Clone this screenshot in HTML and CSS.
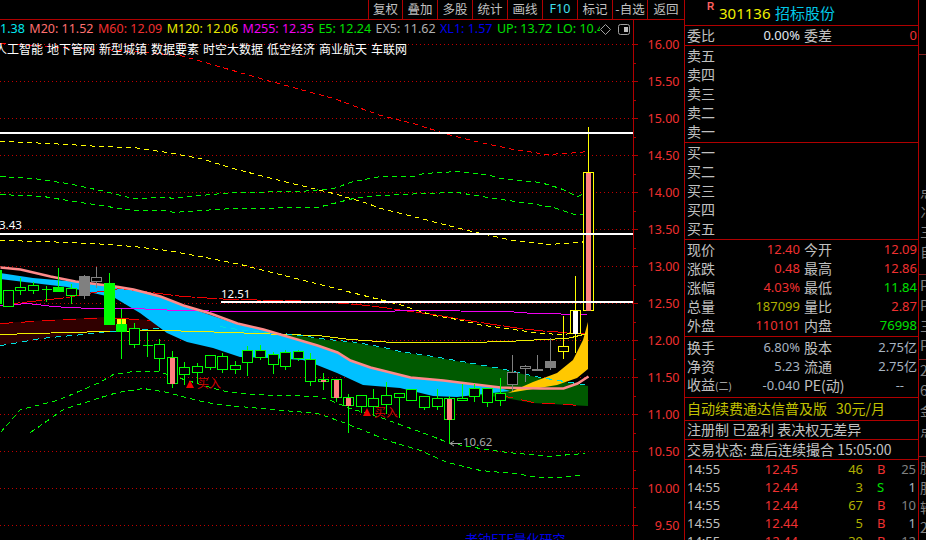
FILE: index.html
```html
<!DOCTYPE html>
<html lang="zh">
<head>
<meta charset="utf-8">
<title>301136 招标股份</title>
<link rel="stylesheet" href="styles.css">
</head>
<body>
<div class="chart-col">
  <nav class="toolbar">
    <span class="tool tool-first">复权</span><span class="tool">叠加</span><span class="tool">多股</span><span class="tool">统计</span><span class="tool">画线</span><span class="tool tool-cyan">F10</span><span class="tool">标记</span><span class="tool">-自选</span><span class="tool tool-last">返回</span>
  </nav>
  <div class="chart">
    <svg class="plot" width="684" height="520" viewBox="0 20 684 520" xmlns="http://www.w3.org/2000/svg">
      <path class="grid" d="M0 44.5H633M0 81.5H633M0 118.5H633M0 155.5H633M0 192.5H633M0 229.5H633M0 266.5H633M0 303.5H633M0 340.5H633M0 377.5H633M0 414.5H633M0 451.5H633M0 488.5H633M0 525.5H633"/>
      <!-- bands -->
      <polygon class="b-maroon" points="0,323 67,319 107,317 150,320 165,328 107,331 67,335 33,340 0,345"/>
      <polygon class="b-green" points="220,328 243,331 267,333 293,335 327,340 357,343 383,348 400,352 433,357 467,363 500,369 540,378 588,386 588,406 533,403 500,397 440,392 400,380 340,355 280,335"/>
      <polygon class="b-blue" points="0,273 33,278 67,281 115,286 160,296 187,307 213,316 240,325 263,329 290,337 317,345 337,352 350,360 370,367 390,372 410,377 443,380 467,383 500,388 510,391 457,397 433,396 400,388 363,385 337,373 317,365 303,360 270,358 240,357 213,348 187,342 167,333 140,313 115,298 67,287 33,283 0,279"/>
      <polygon class="b-gold" points="508,393 533,382 557,373 573,360 583,340 588,322 588,369 577,378 557,385 533,389"/>
      <!-- averages -->
      <polyline class="l-red" points="0,305 13,303 40,300 67,297 93,292 120,288 150,292 183,296 230,299 283,300 317,301 357,304 383,307 410,311 433,314 467,320 493,324 520,328 547,331 587,333"/>
      <polyline class="l-magenta" points="0,305 27,303 53,306 67,307 93,308 133,308 177,310 240,311 380,311 410,310 507,311 533,313 587,314"/>
      <polyline class="l-yellow" points="0,334 67,332 107,331 163,330 230,332 283,334 317,335 350,339 393,342 467,342 507,341 543,339 567,338 587,333"/>
      <polyline class="l-red-d" points="0,323 67,319 107,317 150,320"/>
      <polyline class="l-red-d" points="500,395 510,397 533,402 580,405"/>
      <polyline class="l-cyan" points="0,345 13,343 40,338 72,335 93,333 107,331 160,328"/>
      <polyline class="l-cyan" points="220,326 243,330 267,332 293,334 327,339 357,342 383,347 400,351 433,356 467,362 500,368 540,377 588,385"/>
      <polyline class="l-salmon" points="0,267 20,269 50,276 75,281 115,286 133,289 160,296 183,305 210,313 237,323 263,329 290,337 317,345 337,352 350,360 370,367 390,372 410,377 443,380 467,383 500,387 540,388 563,388 577,383 588,376"/>
      <!-- channel lines -->
      <polyline class="d-red" points="0,43 60,47 120,50 180,55 267,80 333,98 380,115 413,123 447,134 480,142 513,149 547,154 580,152 585,151"/>
      <polyline class="d-yellow" points="0,141 27,142 67,144 100,146 133,147 167,152 200,158 233,168 267,177 300,185 333,193 367,203 380,208 413,216 447,225 480,233 513,240 547,244 580,242 584,241"/>
      <polyline class="d-green" points="0,176 33,178 67,183 100,190 133,198 167,197 173,198 200,195 233,192 300,191 333,188 353,181 380,176 413,176 423,173 457,171 490,175 500,178 540,182 560,188 577,196 584,193"/>
      <polyline class="d-green" points="0,194 43,196 67,200 100,205 133,210 167,210 173,212 200,210 233,208 317,207 333,203 353,198 380,195 423,193 457,192 493,198 530,203 553,207 577,215 584,213"/>
      <polyline class="d-yellow" points="0,240 43,241 93,243 133,246 167,250 200,256 240,264 343,290 363,295 383,300 402,305 417,310 433,315 457,319 483,325 507,328 533,332 557,334 577,333"/>
      <polyline class="d-green" points="0,432 20,409 57,400 97,383 113,374 133,371 157,371 187,380 220,390 250,394 283,395 317,396 330,400 350,408 383,418 402,425 427,434 450,443 480,448 507,452 550,456 570,454 585,453"/>
      <polyline class="d-green" points="30,432 63,409 97,398 117,392 143,388 167,392 197,400 217,404 250,407 283,410 317,413 343,422 363,430 390,441 420,450 447,462 480,470 513,473 540,477 560,477 583,474"/>
      <!-- candles -->
      <rect class="solid-g" x="0" y="270" width="2" height="34"/>
      <path class="c-g" d="M3.5 290.5h10v16h-10z"/>
      <path class="c-g" d="M20.5 278V287M20.5 290V295M15.5 287.5h10v3h-10z"/>
      <path class="c-g" d="M33.5 282V285M33.5 290V294M28.5 285.5h10v5h-10z"/>
      <path class="c-g" d="M46.5 286V302M41.5 289.5h10"/>
      <path class="c-g" d="M58.5 268V287"/><rect class="solid-g" x="53" y="287" width="11" height="5"/>
      <path class="c-g" d="M71.5 284V288M71.5 295V304M66.5 288.5h10v7h-10z"/>
      <path class="c-w" d="M84.5 275V299"/><rect class="solid-w" x="79" y="276" width="11" height="20"/>
      <path class="c-w" d="M96.5 267V277M96.5 281V288M91.5 277.5h10v4h-10z"/>
      <path class="c-g" d="M109.5 273V283"/><rect class="solid-g" x="104" y="283" width="11" height="42"/>
      <path class="c-g" d="M121.5 309V324M121.5 332V359"/><rect class="solid-g" x="116" y="324" width="11" height="8"/>
      <rect class="mark-y" x="117" y="319" width="4" height="5"/><rect class="mark-y" x="122" y="319" width="4" height="5"/><rect class="mark-r" x="117" y="318" width="9" height="1"/>
      <path class="c-g" d="M134.5 323V328M134.5 345V348M129.5 328.5h10v16h-10z"/>
      <path class="c-g" d="M147.5 332V357M142.5 345.5h10"/>
      <path class="c-g" d="M159.5 339V344M159.5 359V371M154.5 344.5h10v14h-10z"/>
      <path class="c-g" d="M172.5 351V357M172.5 384V388M167.5 357.5h10v26h-10z"/><rect class="pink" x="170" y="358" width="5" height="26"/>
      <path class="c-g" d="M184.5 362V367M184.5 375V385M179.5 367.5h10v7h-10z"/>
      <path class="c-g" d="M197.5 363V366M197.5 373V383M192.5 366.5h10v6h-10z"/>
      <path class="c-g" d="M210.5 367V370M205.5 355.5h10v12h-10z"/>
      <path class="c-g" d="M222.5 353V356M222.5 370V373M217.5 356.5h10v13h-10z"/>
      <path class="c-g" d="M235.5 361V365M235.5 370V374M230.5 365.5h10v4h-10z"/>
      <path class="c-g" d="M247.5 346V350M247.5 363V376M242.5 350.5h10v12h-10z"/>
      <path class="c-g" d="M260.5 345V350M260.5 358V360M255.5 350.5h10v7h-10z"/>
      <path class="c-g" d="M273.5 352V354M273.5 365V374M268.5 354.5h10v10h-10z"/>
      <path class="c-g" d="M285.5 350V352M285.5 367V370M280.5 352.5h10v14h-10z"/>
      <path class="c-g" d="M298.5 350V351M298.5 359V361M293.5 351.5h10v7h-10z"/>
      <path class="c-g" d="M310.5 353V359M310.5 382V386M305.5 359.5h10v22h-10z"/>
      <path class="c-g" d="M323.5 373V379M323.5 382V390M318.5 379.5h10v2h-10z"/><rect class="pink" x="321" y="380" width="5" height="2"/>
      <path class="c-g" d="M336.5 398V402M331.5 379.5h10v18h-10z"/><rect class="pink" x="334" y="380" width="5" height="18"/>
      <path class="c-g" d="M348.5 394V397M348.5 406V433M343.5 397.5h10v8h-10z"/><rect class="pink" x="346" y="398" width="5" height="8"/>
      <path class="c-g" d="M361.5 407V413M356.5 395.5h10v11h-10z"/>
      <path class="c-g" d="M373.5 389V398M373.5 407V415M368.5 398.5h10v8h-10z"/>
      <path class="c-g" d="M386.5 382V395M386.5 405V414M381.5 395.5h10v9h-10z"/>
      <path class="c-g" d="M399.5 398V418M394.5 393.5h10v4h-10z"/>
      <path class="c-g" d="M406.5 389.5h10v11h-10z"/>
      <path class="c-g" d="M424.5 408V410M419.5 396.5h10v11h-10z"/>
      <path class="c-g" d="M437.5 389V398M437.5 407V410M432.5 398.5h10v8h-10z"/>
      <path class="c-g" d="M449.5 396V398M449.5 420V443M444.5 398.5h10v21h-10z"/><rect class="pink" x="447" y="399" width="5" height="21"/>
      <path class="c-g" d="M462.5 384V398M457.5 398.5h10v2h-10z"/>
      <path class="c-g" d="M474.5 384V388M474.5 397V402M469.5 388.5h10v8h-10z"/>
      <path class="c-g" d="M487.5 403V407M482.5 388.5h10v14h-10z"/>
      <path class="c-g" d="M500.5 378V393M500.5 401V406M495.5 393.5h10v7h-10z"/>
      <path class="c-w" d="M512.5 355V372M512.5 385V391M507.5 372.5h10v12h-10z"/>
      <path class="c-w" d="M525.5 365V366M525.5 369V382M520.5 366.5h10v2h-10z"/>
      <path class="c-w" d="M537.5 355V369M532.5 369.5h10v1h-10z"/>
      <path class="c-w" d="M550.5 338V361M550.5 368V370"/><rect class="solid-w" x="545" y="361" width="11" height="7"/>
      <path class="c-y" d="M563.5 316V346M563.5 352V359M558.5 346.5h10v5h-10z"/>
      <path class="c-y" d="M575.5 276V310M575.5 334V353M570.5 310.5h10v23h-10z"/><rect class="white" x="573" y="311" width="5" height="23"/>
      <path class="c-y" d="M588.5 127V172M583.5 172.5h10v138h-10z"/><rect class="pink" x="586" y="173" width="5" height="138"/>
      <!-- horizontal levels -->
      <rect class="level" x="0" y="132" width="633" height="2"/>
      <rect class="level" x="0" y="233" width="633" height="2"/>
      <rect class="level" x="221" y="301" width="412" height="2"/>
      <text class="t-white" x="-1" y="229">3.43</text>
      <text class="t-white" x="221" y="298">12.51</text>
      <!-- buy markers -->
      <polygon class="tri" points="190,380 194,388 186,388"/>
      <text class="t-buy" x="197" y="388">买入</text>
      <polygon class="tri" points="367,408 371,416 363,416"/>
      <text class="t-buy" x="374" y="417">买入</text>
      <path class="arrow" d="M450 443.5H462M450 443.5L454 441M450 443.5L454 446"/>
      <text class="t-gray" x="463" y="446">10.62</text>
      <text class="t-blue" x="465" y="544">老钟ETF量化研究</text>
      <!-- legend icons -->
      <polygon class="diamond" points="605.5,24.5 610.5,29.5 605.5,34.5 600.5,29.5"/>
      <rect class="box" x="618.5" y="24.5" width="11" height="10" rx="2"/>
      <rect class="box-in" x="624" y="27" width="4" height="5"/>
      <!-- axis -->
      <path class="axis" d="M633.5 20V540"/>
      <path class="axis" d="M633 44.5H638M633 63.5H636M633 81.5H638M633 100.5H636M633 118.5H638M633 137.5H636M633 155.5H638M633 174.5H636M633 192.5H638M633 211.5H636M633 229.5H638M633 248.5H636M633 266.5H638M633 285.5H636M633 303.5H638M633 322.5H636M633 340.5H638M633 359.5H636M633 377.5H638M633 396.5H636M633 414.5H638M633 433.5H636M633 451.5H638M633 470.5H636M633 488.5H638M633 507.5H636M633 525.5H638"/>
      <text class="tick" x="679.5" y="48.5">16.00</text>
      <text class="tick" x="679.5" y="85.5">15.50</text>
      <text class="tick" x="679.5" y="122.5">15.00</text>
      <text class="tick" x="679.5" y="159.5">14.50</text>
      <text class="tick" x="679.5" y="196.5">14.00</text>
      <text class="tick" x="679.5" y="233.5">13.50</text>
      <text class="tick" x="679.5" y="270.5">13.00</text>
      <text class="tick" x="679.5" y="307.5">12.50</text>
      <text class="tick" x="679.5" y="344.5">12.00</text>
      <text class="tick" x="679.5" y="381.5">11.50</text>
      <text class="tick" x="679.5" y="418.5">11.00</text>
      <text class="tick" x="679.5" y="455.5">10.50</text>
      <text class="tick" x="679.5" y="492.5">10.00</text>
      <text class="tick" x="679.5" y="529.5">9.50</text>
    </svg>
    <div class="legend">
      <span class="cyan">1.38</span><span class="salmon">M20: 11.52</span><span class="red">M60: 12.09</span><span class="yellow">M120: 12.06</span><span class="magenta">M255: 12.35</span><span class="green">E5: 12.24</span><span class="gray">EX5: 11.62</span><span class="blue">XL1: 1.57</span><span class="green">UP: 13.72</span><span class="green">LO: 10.48</span>
    </div>
    <div class="themes">
      <span>人工智能</span><span>地下管网</span><span>新型城镇</span><span>数据要素</span><span>时空大数据</span><span>低空经济</span><span>商业航天</span><span>车联网</span>
    </div>
  </div>
</div>
<aside class="panel">
  <header class="p-head">
    <span class="p-r">R</span><span class="p-code">301136</span><span class="p-name">招标股份</span>
  </header>
  <section class="q q-1">
    <span>委比</span><b class="num white-b">0.00%</b><span class="l2">委差</span><b class="num red">0</b>
  </section>
  <section class="q q-5 q-list">
    <span>卖五</span><span>卖四</span><span>卖三</span><span>卖二</span><span>卖一</span>
  </section>
  <section class="q q-5 q-list">
    <span>买一</span><span>买二</span><span>买三</span><span>买四</span><span>买五</span>
  </section>
  <section class="q q-5">
    <span>现价</span><b class="num red">12.40</b><span class="l2">今开</span><b class="num red">12.09</b>
    <span>涨跌</span><b class="num red">0.48</b><span class="l2">最高</span><b class="num red">12.86</b>
    <span>涨幅</span><b class="num red">4.03%</b><span class="l2">最低</span><b class="num green">11.84</b>
    <span>总量</span><b class="num olive">187099</b><span class="l2">量比</span><b class="num red">2.87</b>
    <span>外盘</span><b class="num red">110101</b><span class="l2">内盘</span><b class="num green">76998</b>
  </section>
  <section class="q q-3">
    <span>换手</span><b class="num steel">6.80%</b><span class="l2">股本</span><b class="num steel">2.75亿</b>
    <span>净资</span><b class="num steel">5.23</b><span class="l2">流通</span><b class="num steel">2.75亿</b>
    <span>收益<small class="sub">(二)</small></span><b class="num steel">-0.040</b><span class="l2">PE(动)</span><b class="num steel num-dash">--</b>
  </section>
  <div class="line line-ad"><span>自动续费通达信普及版</span><span class="ad-price">30元/月</span></div>
  <div class="line line-reg">注册制 已盈利 表决权无差异</div>
  <div class="line line-state">交易状态: 盘后连续撮合 15:05:00</div>
  <section class="ticks">
    <span>14:55</span><b class="num red">12.45</b><b class="num olive">46</b><b class="flag red">B</b><b class="num dim">25</b>
    <span>14:55</span><b class="num red">12.44</b><b class="num olive">3</b><b class="flag green">S</b><b class="num steel">1</b>
    <span>14:55</span><b class="num red">12.44</b><b class="num olive">67</b><b class="flag red">B</b><b class="num dim">10</b>
    <span>14:55</span><b class="num red">12.44</b><b class="num olive">5</b><b class="flag red">B</b><b class="num steel">1</b>
    <span>14:55</span><b class="num red">12.44</b><b class="num olive">39</b><b class="flag red">B</b><b class="num dim">12</b>
  </section>
</aside>
<aside class="far">
  <div class="far-sec far-a"></div>
  <div class="far-sec far-b"><span>点</span><span>冫</span><span>三</span><span>自</span></div>
  <div class="far-sec far-c"><span>P</span><span>P</span><span>三</span><span>P</span></div>
  <div class="far-sec far-d"><span>2</span><span>6</span><span>金</span><span>点</span></div>
  <div class="far-sec far-e"><span>胜</span><span>肝</span><span>轮</span><span>2</span></div>
</aside>
</body>
</html>
```
FILE: styles.css
```css
* { box-sizing: border-box; }
html, body { margin: 0; padding: 0; }
body {
  width: 926px;
  height: 540px;
  overflow: hidden;
  display: flex;
  background: #000;
  color: #c0c0c0;
  font-family: "Noto Sans", "Noto Sans CJK SC", sans-serif;
  font-size: 14px;
}

/* left column */
.chart-col { width: 684px; height: 540px; display: flex; flex-direction: column; }
.toolbar { height: 20px; display: flex; justify-content: flex-end; border-bottom: 1px solid #b00000; }
.tool {
  width: 35px;
  border-left: 1px solid #b00000;
  font-family: "Noto Sans CJK SC", "Noto Sans", sans-serif;
  font-size: 12.5px;
  line-height: 18px;
  text-align: center;
  white-space: nowrap;
  overflow: hidden;
}
.tool-first { width: 34px; }
.tool-last { width: 37px; }
.tool-cyan { color: #40e0f0; font-family: "Noto Sans", sans-serif; }

.chart { position: relative; flex: 1; overflow: hidden; }
.plot { display: block; }

.grid { stroke: #c00000; stroke-width: 1; stroke-dasharray: 1 3; fill: none; }
.b-maroon { fill: #300000; }
.b-green { fill: #005a00; }
.b-blue { fill: #00c0ff; }
.b-gold { fill: #ffc800; }

polyline { fill: none; shape-rendering: crispEdges; transform: translate(.5px, .5px); }
.l-red { stroke: #f00000; stroke-dasharray: 20 2; }
.l-magenta { stroke: #f000f0; }
.l-yellow { stroke: #f0f000; }
.l-red-d { stroke: #f00000; stroke-dasharray: 13 8; }
.l-cyan { stroke: #00e0e0; stroke-dasharray: 6 5; }
.l-salmon { stroke: #ff8a8a; stroke-width: 2.5; shape-rendering: auto; }
.d-red { stroke: #ff0000; stroke-dasharray: 5 4; }
.d-yellow { stroke: #ffff00; stroke-dasharray: 5 4; }
.d-green { stroke: #00f800; stroke-dasharray: 5 4; }

.c-g, .c-w, .c-y { fill: #000; stroke-width: 1; shape-rendering: crispEdges; }
.c-g { stroke: #00ff00; }
.c-w { stroke: #808080; }
.c-y { stroke: #ffff00; }
.solid-g { fill: #00ff00; }
.solid-w { fill: #808080; }
.pink { fill: #ff8080; }
.white { fill: #fff; }
.mark-y { fill: #ffff00; }
.mark-r { fill: #f00000; }
.level { fill: #fff; }
.tri { fill: #f00000; }
.arrow { stroke: #a0a0a0; fill: none; }
.diamond { fill: none; stroke: #a0a0a0; }
.box { fill: none; stroke: #a0a0a0; }
.box-in { fill: #c0c0c0; }
.axis { stroke: #b00000; fill: none; shape-rendering: crispEdges; }

.tick { fill: #f03030; font-size: 12.5px; text-anchor: end; }
.t-white { fill: #fff; font-size: 11.5px; }
.t-gray { fill: #a8a8a8; font-size: 11.5px; }
.t-buy { fill: #d00000; font-family: "Noto Sans CJK SC", sans-serif; font-size: 12px; }
.t-blue { fill: #0000e8; font-family: "Noto Sans CJK SC", sans-serif; font-size: 13px; }

.legend {
  position: absolute;
  top: 0;
  left: 0;
  width: 600px;
  height: 18px;
  display: flex;
  gap: 4.5px;
  overflow: hidden;
  font-size: 12.5px;
  line-height: 18px;
  white-space: nowrap;
}
.themes {
  position: absolute;
  top: 20px;
  left: -5px;
  display: flex;
  gap: 4px;
  color: #fff;
  font-family: "Noto Sans CJK SC", sans-serif;
  font-size: 12px;
  line-height: 18px;
  white-space: nowrap;
}

.cyan { color: #00e8f0; }
.salmon { color: #ff7070; }
.red { color: #f03030; }
.yellow { color: #e8e800; }
.magenta { color: #f000f0; }
.green { color: #00e000; }
.gray { color: #b0b0b0; }
.blue { color: #0000f0; }
.olive { color: #b0b000; }
.steel { color: #a8b4c0; }
.dim { color: #808080; }
.white-b { color: #e0e8f0; }

/* quote panel */
.panel {
  width: 235px;
  height: 540px;
  overflow: hidden;
  border-left: 1px solid #b00000;
  border-right: 1px solid #b00000;
  display: flex;
  flex-direction: column;
  font-family: "Noto Sans CJK SC", "Noto Sans", sans-serif;
  line-height: 16px;
}
.p-head {
  position: relative;
  height: 26px;
  flex: none;
  display: flex;
  align-items: center;
  padding-left: 34px;
  gap: 4.5px;
  border-bottom: 1px solid #b00000;
  font-size: 15px;
}
.p-r { position: absolute; left: 22px; top: 1px; color: #ff6060; font-family: "Liberation Sans", sans-serif; font-size: 10px; font-weight: bold; line-height: 12px; }
.p-code { color: #f0f000; font-family: "Noto Sans", sans-serif; }
.p-name { color: #00c8e8; }

.q {
  flex: none;
  display: grid;
  grid-template-columns: 30px 83px 32px 1fr;
  align-items: center;
  padding: 0 1px 2px 2px;
  border-bottom: 1px solid #b00000;
  white-space: nowrap;
}
.q-1 { height: 20px; }
.q-5 { height: 97px; grid-template-rows: repeat(5, 1fr); }
.q-3 { height: 61px; grid-template-rows: repeat(3, 1fr); }
.q-list { grid-template-columns: 1fr; }
.l2 { padding-left: 4px; }
.sub { font-size: 10px; }
.num {
  font-family: "Noto Sans", "Noto Sans CJK SC", sans-serif;
  font-size: 13px;
  font-weight: normal;
  text-align: right;
}
.num-dash { padding-right: 13px; }
.line {
  flex: none;
  display: flex;
  align-items: center;
  gap: 9px;
  padding: 0 0 2px 2px;
  border-bottom: 1px solid #b00000;
  white-space: nowrap;
}
.line-ad { height: 23px; color: #c0c000; }
.line-reg { height: 19px; }
.line-state { height: 20px; }
.ticks {
  flex: none;
  display: grid;
  grid-template-columns: 40px 71px 65px 27px 1fr;
  grid-auto-rows: 18px;
  align-items: center;
  padding: 0 2px;
  font-family: "Noto Sans", sans-serif;
  font-size: 13px;
}
.flag { padding-left: 14px; font-weight: normal; }

/* clipped neighbour column */
.far {
  width: 7px;
  height: 540px;
  overflow: hidden;
  display: flex;
  flex-direction: column;
  font-family: "Noto Sans CJK SC", sans-serif;
  font-size: 14px;
  color: #808080;
}
.far-sec { flex: none; display: flex; flex-direction: column; border-bottom: 1px solid #802020; padding-left: 1px; white-space: nowrap; }
.far-sec span { height: 20px; line-height: 20px; }
.far-a { height: 55px; }
.far-b { height: 220px; justify-content: flex-end; padding-bottom: 13px; }
.far-c { height: 85px; }
.far-d { height: 97px; }
.far-e { height: 83px; border-bottom: 0; }
```
